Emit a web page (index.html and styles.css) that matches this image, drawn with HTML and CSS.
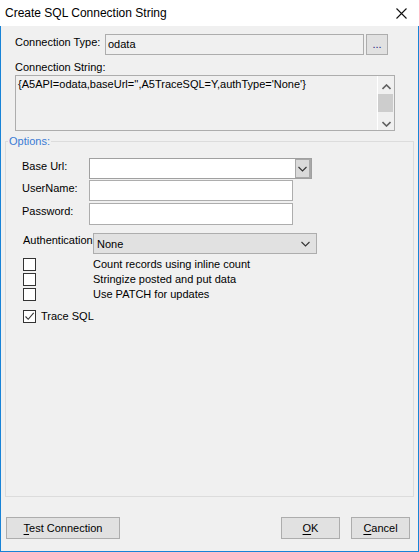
FILE: index.html
```html
<!DOCTYPE html>
<html>
<head>
<meta charset="utf-8">
<link rel="stylesheet" href="styles.css">
</head>
<body>
<div class="window">
  <div class="titlebar">
    <span class="title">Create SQL Connection String</span>
    <svg class="close" width="11" height="11" viewBox="0 0 11 11"><path d="M0.5 0.5 L10.5 10.5 M10.5 0.5 L0.5 10.5" stroke="#111" stroke-width="1.1" fill="none"/></svg>
  </div>
  <div class="main">
    <div class="row-type">
      <span class="lbl-type">Connection Type:</span>
      <div class="ro-input">odata</div>
      <div class="dots-btn">...</div>
    </div>
    <div class="lbl-cs">Connection String:</div>
    <div class="textarea">
      <div class="ta-text">{A5API=odata,baseUrl='',A5TraceSQL=Y,authType='None'}</div>
      <div class="vscroll">
        <svg class="sarrow" width="9" height="6" viewBox="0 0 9 6"><path d="M0.5 5 L4.5 1 L8.5 5" stroke="#606060" stroke-width="1.6" fill="none"/></svg>
        <div class="thumb"></div>
        <svg class="sarrow down" width="9" height="6" viewBox="0 0 9 6"><path d="M0.5 1 L4.5 5 L8.5 1" stroke="#606060" stroke-width="1.6" fill="none"/></svg>
      </div>
    </div>
    <div class="group">
      <span class="legend">Options:</span>
      <div class="field">
        <span class="flbl">Base Url:</span>
        <div class="combo-edit">
          <div class="ce-text"></div>
          <div class="ce-btn"><svg width="9" height="6" viewBox="0 0 9 6"><path d="M0.5 1 L4.5 5 L8.5 1" stroke="#333" stroke-width="1.1" fill="none"/></svg></div>
        </div>
      </div>
      <div class="field f2">
        <span class="flbl">UserName:</span>
        <div class="tinput"></div>
      </div>
      <div class="field f3">
        <span class="flbl">Password:</span>
        <div class="tinput tall"></div>
      </div>
      <div class="field auth">
        <span class="flbl alb">Authentication</span>
        <div class="combo">
          <span>None</span>
          <svg width="9" height="6" viewBox="0 0 9 6"><path d="M0.5 1 L4.5 5 L8.5 1" stroke="#333" stroke-width="1.1" fill="none"/></svg>
        </div>
      </div>
      <div class="checks">
        <div class="chk-row"><span class="box"></span><span class="ctext">Count records using inline count</span></div>
        <div class="chk-row"><span class="box"></span><span class="ctext">Stringize posted and put data</span></div>
        <div class="chk-row"><span class="box"></span><span class="ctext">Use PATCH for updates</span></div>
      </div>
      <div class="chk-trace">
        <span class="box"><svg width="11" height="11" viewBox="0 0 11 11"><path d="M1.5 5.5 L4.2 8.3 L9.7 1.8" stroke="#333" stroke-width="1.1" fill="none"/></svg></span>
        <span class="ttext">Trace SQL</span>
      </div>
    </div>
    <div class="footer">
      <div class="btn btn-test"><u>T</u>est Connection</div>
      <div class="spacer"></div>
      <div class="btn btn-ok"><u>O</u>K</div>
      <div class="btn btn-cancel"><u>C</u>ancel</div>
    </div>
  </div>
</div>
</body>
</html>
```

FILE: styles.css
```css
* { box-sizing: border-box; }
html, body { margin: 0; padding: 0; }
body {
  width: 419px;
  height: 552px;
  font-family: "Liberation Sans", Arial, sans-serif;
  font-size: 11px;
  color: #000;
  background: #f0f0f0;
}
.window {
  width: 419px;
  height: 552px;
  display: flex;
  flex-direction: column;
}
.titlebar {
  height: 26px;
  background: #fff;
  display: flex;
  align-items: center;
  padding-left: 5px;
  padding-right: 12px;
}
.title {
  font-family: "Liberation Sans", Arial, sans-serif;
  font-size: 12px;
  flex: 1;
  margin-top: -1px;
}
.close { margin-top: 1px; }
.main {
  flex: 1;
  background: #f0f0f0;
  border: 1px solid #1883d7;
  border-top: none;
  display: flex;
  flex-direction: column;
  padding: 8px 0 0 0;
}
.row-type {
  display: flex;
  align-items: flex-start;
  padding-left: 14px;
}
.lbl-type {
  width: 90px;
  padding-top: 2px;
  line-height: 13px;
}
.ro-input {
  width: 259px;
  height: 21px;
  border: 1px solid #adadad;
  background: #f0f0f0;
  padding: 3px 0 0 2px;
  line-height: 13px;
}
.dots-btn {
  margin-left: 2px;
  width: 22px;
  height: 21px;
  border: 1px solid #adadad;
  background: #e1e1e1;
  text-align: center;
  line-height: 19px;
  color: #1c1c80;
  letter-spacing: 0;
}
.lbl-cs {
  margin: 6px 0 0 14px;
  line-height: 13px;
  height: 13px;
}
.textarea {
  margin: 1px 0 0 14px;
  width: 380px;
  height: 56px;
  border: 1px solid #adadad;
  background: #f0f0f0;
  display: flex;
}
.ta-text {
  flex: 1;
  padding: 2px 0 0 2px;
  line-height: 13px;
}
.vscroll {
  width: 17px;
  border-left: 1px solid #fff;
  display: flex;
  flex-direction: column;
  align-items: center;
  padding-top: 8px;
}
.sarrow { display: block; }
.thumb {
  width: 15px;
  height: 18px;
  background: #cdcdcd;
  margin-top: 4px;
  margin-left: -1px;
}
.sarrow.down { margin-top: 9px; }
.group {
  position: relative;
  margin: 10px 0 0 4px;
  width: 409px;
  height: 356px;
  border: 1px solid #dcdcdc;
  padding-top: 16px;
}
.legend {
  position: absolute;
  left: 2px;
  top: -7px;
  background: #f0f0f0;
  color: #3a7bd5;
  line-height: 13px;
  padding: 0 1px;
}
.field {
  display: flex;
  align-items: flex-start;
  padding-left: 16px;
}
.flbl {
  width: 67px;
  line-height: 13px;
  padding-top: 2px;
}
.f2 { margin-top: 1px; }
.f3 { margin-top: 2px; }
.combo-edit {
  width: 223px;
  height: 21px;
  border: 1px solid #a0a0a0;
  background: #fff;
  display: flex;
}
.ce-text { flex: 1; }
.ce-btn {
  width: 16px;
  background: #dadada;
  border: 1px solid #a8a8a8;
  border-right-width: 2px;
  display: flex;
  align-items: center;
  justify-content: center;
}
.tinput {
  width: 204px;
  height: 21px;
  border: 1px solid #adadad;
  background: #fff;
}
.tinput.tall { height: 22px; }
.auth { margin-top: 8px; padding-left: 17px; }
.alb { width: 70px; padding-top: 1px; }
.combo {
  width: 224px;
  height: 21px;
  border: 1px solid #adadad;
  background: #e1e1e1;
  display: flex;
  align-items: center;
  justify-content: space-between;
  padding: 1px 6px 0 3px;
}
.checks {
  margin-top: 4px;
  padding-left: 17px;
  display: flex;
  flex-direction: column;
  gap: 2px;
}
.chk-row {
  display: flex;
  align-items: center;
  height: 13px;
}
.box {
  width: 13px;
  height: 13px;
  border: 1px solid #333;
  background: #fff;
  display: block;
  flex: none;
}
.box svg { display: block; }
.ctext {
  margin-left: 57px;
  line-height: 13px;
}
.chk-trace {
  margin-top: 9px;
  padding-left: 17px;
  display: flex;
  align-items: center;
  height: 13px;
}
.ttext { margin-left: 5px; line-height: 13px; }
.footer {
  display: flex;
  margin-top: 20px;
  padding-left: 5px;
  padding-right: 8px;
}
.spacer { flex: 1; }
.btn {
  height: 22px;
  border: 1px solid #adadad;
  background: #e1e1e1;
  text-align: center;
  line-height: 20px;
}
.btn u { text-underline-offset: 2px; }
.btn-test { width: 114px; }
.btn-ok { width: 59px; }
.btn-cancel { width: 59px; margin-left: 11px; }
```
